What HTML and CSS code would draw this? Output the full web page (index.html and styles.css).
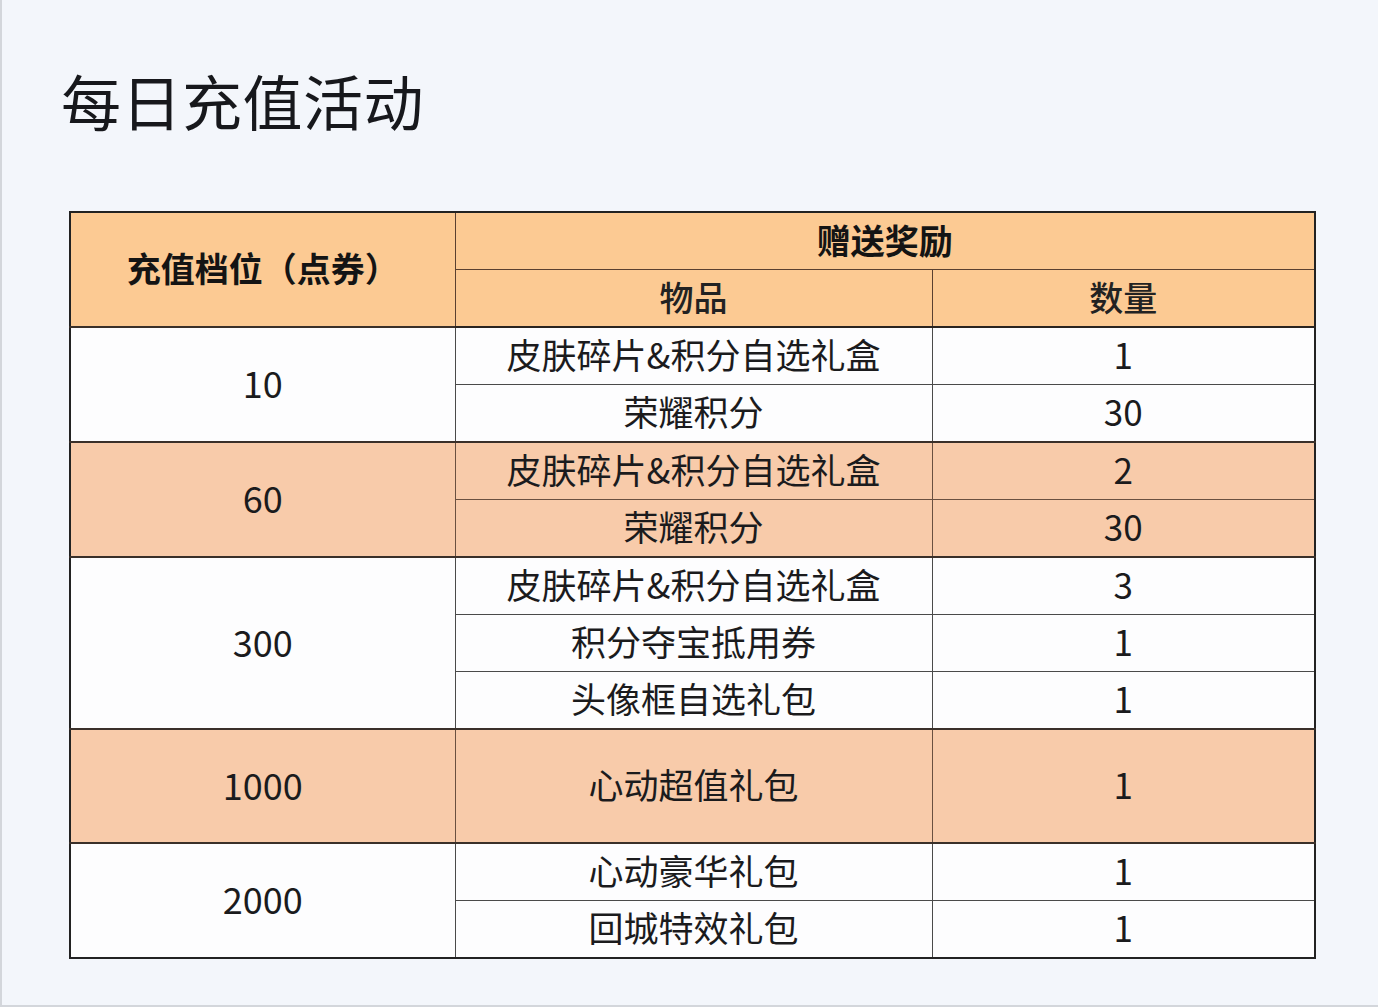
FILE: index.html
```html
<!DOCTYPE html>
<html lang="zh-CN">
<head>
<meta charset="utf-8">
<title>每日充值活动</title>
<link rel="stylesheet" href="styles.css">
</head>
<body>
<div class="page">
  <h1 class="title">每日充值活动</h1>
  <table class="rewards">
    <colgroup>
      <col class="c1"><col class="c2"><col class="c3">
    </colgroup>
    <thead>
      <tr>
        <th rowspan="2" class="tier-head">充值档位（点券）</th>
        <th colspan="2" class="gift-head">赠送奖励</th>
      </tr>
      <tr class="sub">
        <th class="plain">物品</th>
        <th class="plain">数量</th>
      </tr>
    </thead>
    <tbody class="grp">
      <tr><td rowspan="2" class="tier">10</td><td>皮肤碎片&amp;积分自选礼盒</td><td>1</td></tr>
      <tr><td>荣耀积分</td><td>30</td></tr>
    </tbody>
    <tbody class="grp hl">
      <tr><td rowspan="2" class="tier">60</td><td>皮肤碎片&amp;积分自选礼盒</td><td>2</td></tr>
      <tr><td>荣耀积分</td><td>30</td></tr>
    </tbody>
    <tbody class="grp">
      <tr><td rowspan="3" class="tier">300</td><td>皮肤碎片&amp;积分自选礼盒</td><td>3</td></tr>
      <tr><td>积分夺宝抵用券</td><td>1</td></tr>
      <tr><td>头像框自选礼包</td><td>1</td></tr>
    </tbody>
    <tbody class="grp hl">
      <tr class="tall"><td class="tier">1000</td><td>心动超值礼包</td><td>1</td></tr>
    </tbody>
    <tbody class="grp">
      <tr><td rowspan="2" class="tier">2000</td><td>心动豪华礼包</td><td>1</td></tr>
      <tr><td>回城特效礼包</td><td>1</td></tr>
    </tbody>
  </table>
</div>
</body>
</html>
```
FILE: styles.css
```css
html, body {
  margin: 0;
  padding: 0;
  background: #f3f6fb;
}
.page {
  width: 1376px;
  height: 1005px;
  border-left: 2px solid #d3d6db;
  border-bottom: 2px solid #d3d6db;
  background: #f3f6fb;
  font-family: "Noto Sans CJK SC", "Noto Sans", sans-serif;
  color: #1b1b1d;
  overflow: hidden;
}
.title {
  margin: 0;
  padding: 57px 0 0 59px;
  height: 86px;
  font-size: 60px;
  font-weight: 400;
  line-height: 86px;
  letter-spacing: 0.5px;
  color: #17181c;
}
.rewards {
  margin: 68px 0 0 67px;
  border-collapse: collapse;
  border: 2px solid #222;
  table-layout: fixed;
  width: 1245px;
}
.c1 { width: 385px; }
.c2 { width: 477px; }
.c3 { width: 383px; }
.rewards th,
.rewards td {
  border: 1px solid #4a4a4a;
  padding: 0 0 5px;
  text-align: center;
  vertical-align: middle;
  height: 51px;
  line-height: 1;
}
.rewards thead th {
  background: #fcca93;
  border-color: #5a4030;
  padding-bottom: 3px;
  height: 53px;
}
.tier-head,
.gift-head {
  font-size: 34px;
  font-weight: 700;
  color: #141414;
}
.tier-head { padding-top: 4px; }
.plain {
  font-size: 34px;
  font-weight: 500;
  color: #222;
}
.rewards thead tr:last-child th { border-bottom: 2px solid #2a2420; }
.rewards td {
  background: #fdfdfe;
  font-size: 35px;
  font-weight: 400;
  color: #1b1b1d;
}
.rewards td.tier { font-size: 36px; }
.grp { border-top: 2px solid #3a302a; }
.hl td { background: #f8cbaa; }
.hl td { border-color: #6a5040; }
.tall td { height: 107px; }
```
